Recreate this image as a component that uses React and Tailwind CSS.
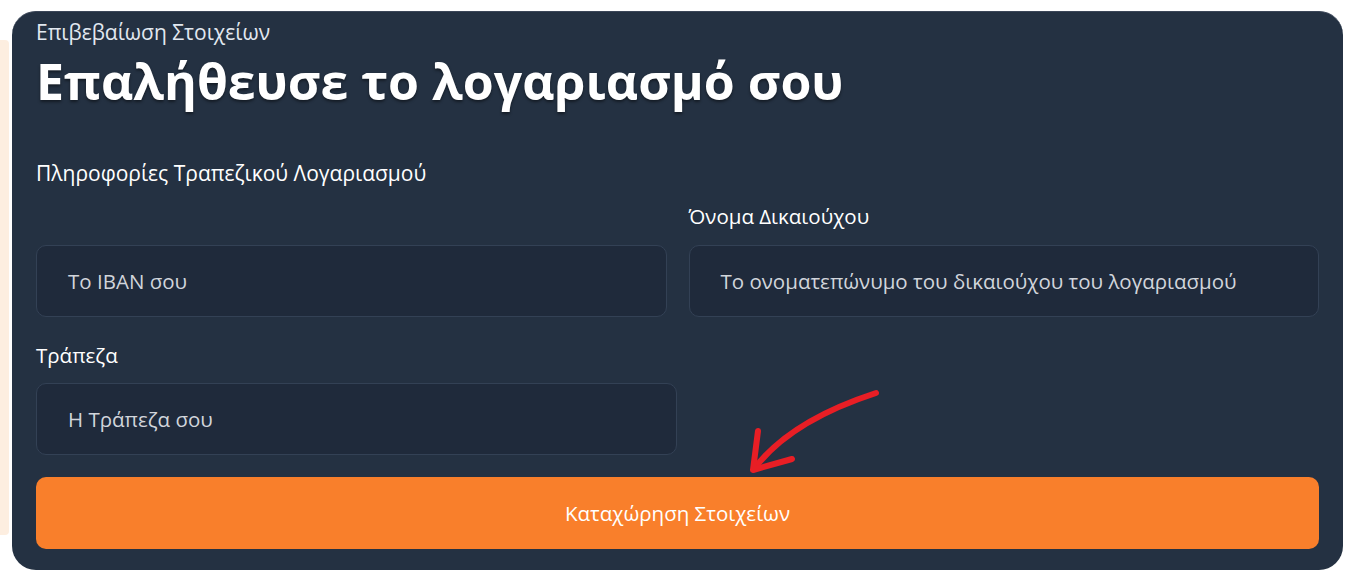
export default function App() {
  const font = { fontFamily: '"Open Sans", "Noto Sans", sans-serif' };
  return (
    <div className="w-[1355px] h-[582px] bg-white flex items-start" style={font}>
      <div className="w-[9px] h-[495px] mt-[40px] bg-[#fdeee0] rounded-r-sm" />
      <div className="relative ml-[3px] mt-[11px] w-[1331px] h-[559px] rounded-[24px] bg-[#243142] border-t border-[#3b4658] px-[24px] pt-[8px]">
        <div className="text-[21px] leading-[24px] text-[#e2e8f0]">Επιβεβαίωση Στοιχείων</div>
        <h1 className="mt-[6px] text-[50px] leading-[62px] font-bold text-white [text-shadow:0_2px_3px_rgba(0,0,0,0.45)]">
          Επαλήθευσε το λογαριασμό σου
        </h1>
        <div className="grid grid-cols-2 gap-x-[22px] items-end mt-[47px]">
          <div className="flex flex-col">
            <div className="text-[21px] leading-[28px] font-medium text-white">Πληροφορίες Τραπεζικού Λογαριασμού</div>
            <div className="mt-[58px] h-[72px] rounded-[10px] bg-[#1f2a3b] border border-[#334155] flex items-center px-[31px] text-[20.5px] text-[#d1d5db]">
              Το IBAN σου
            </div>
          </div>
          <div className="flex flex-col">
            <div className="text-[20.5px] leading-[28px] font-medium text-white">Όνομα Δικαιούχου</div>
            <div className="mt-[15px] h-[72px] rounded-[10px] bg-[#1f2a3b] border border-[#334155] flex items-center px-[31px] text-[20.5px] text-[#d1d5db]">
              Το ονοματεπώνυμο του δικαιούχου του λογαριασμού
            </div>
          </div>
        </div>
        <div className="mt-[24px] text-[20.5px] leading-[28px] font-medium text-white">Τράπεζα</div>
        <div className="mt-[14px] w-[641px] h-[72px] rounded-[10px] bg-[#1f2a3b] border border-[#334155] flex items-center px-[31px] text-[20.5px] text-[#d1d5db]">
          Η Τράπεζα σου
        </div>
        <button className="mt-[22px] w-full h-[72px] rounded-[10px] bg-[#f97f2b] text-white text-[20.5px] flex items-center justify-center">
          Καταχώρηση Στοιχείων
        </button>
        <svg className="absolute left-[728px] top-[369px]" width="150" height="100" viewBox="0 0 150 100" fill="none">
          <path d="M136,12 Q50,40 14,88" stroke="#e81e25" strokeWidth="6" strokeLinecap="round" />
          <path d="M18,50 L13,89 L52,78" stroke="#e81e25" strokeWidth="6" strokeLinecap="round" strokeLinejoin="round" />
        </svg>
      </div>
    </div>
  );
}
